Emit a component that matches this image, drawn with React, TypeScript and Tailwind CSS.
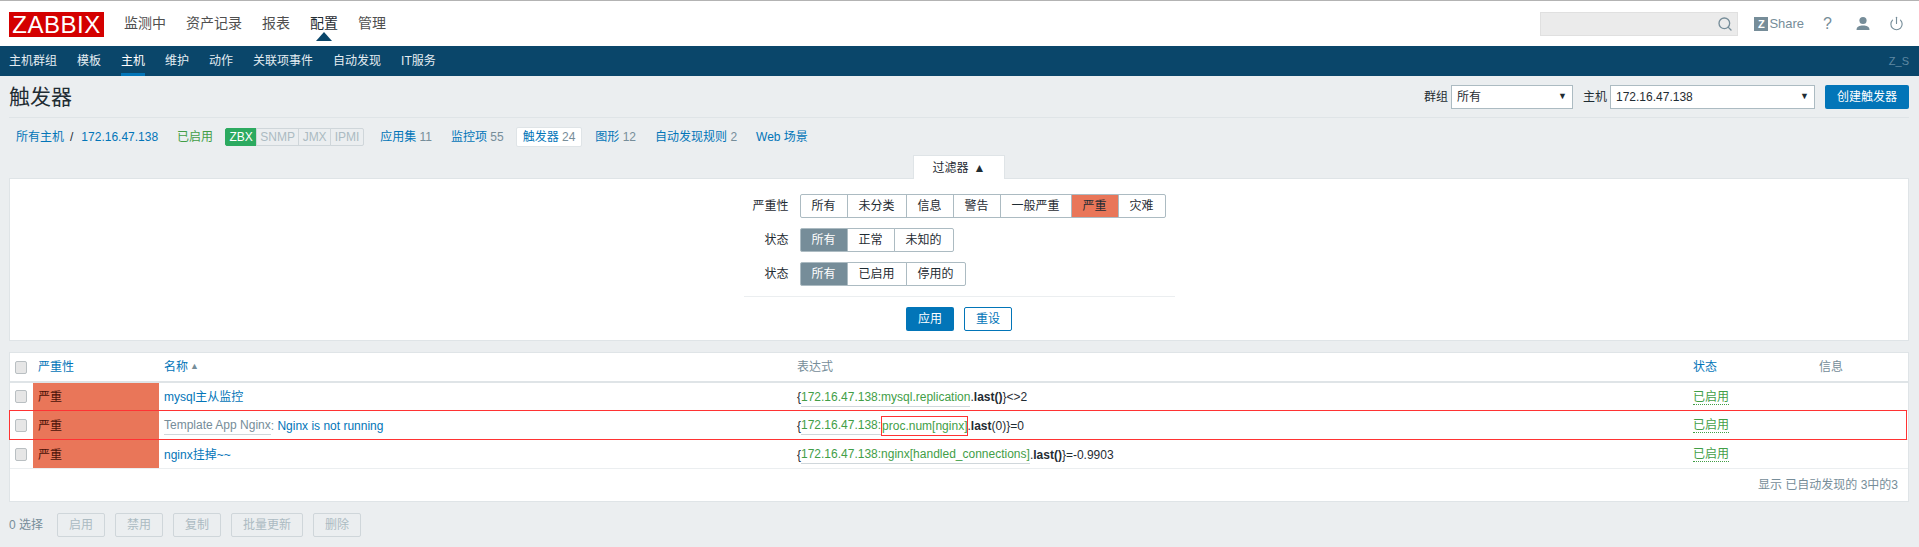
import React from "react";
import { Search, Power } from "lucide-react";

const mainNav = ["监测中", "资产记录", "报表", "配置", "管理"];
const subNav = ["主机群组", "模板", "主机", "维护", "动作", "关联项事件", "自动发现", "IT服务"];

function Seg({ items, active, tone }: { items: string[]; active: number; tone: "orange" | "gray" }) {
  return (
    <div className="flex">
      {items.map((t, i) => (
        <div
          key={t}
          className={
            "h-6 px-[11px] flex items-center border border-[#acbbc2] first:rounded-l-[2px] last:rounded-r-[2px] " +
            (i > 0 ? "-ml-px " : "") +
            (i === active
              ? tone === "orange"
                ? "bg-[#e97659] text-[#1f2c33] relative"
                : "bg-[#768d99] border-[#768d99] text-white"
              : "bg-white text-[#1f2c33]")
          }
        >
          {t}
        </div>
      ))}
    </div>
  );
}

function FilterRow({ label, children }: { label: string; children: React.ReactNode }) {
  return (
    <div className="flex items-center mt-[10px] first:mt-0">
      <div className="w-[45px] text-right text-[#1f2c33] mr-[11px]">{label}</div>
      {children}
    </div>
  );
}

function Check() {
  return (
    <div className="pl-[5px] flex items-center">
      <span className="block w-[12px] h-[13px] rounded-[2px] bg-[#e6e6e6] border border-[#b9bfc2]" />
    </div>
  );
}

function Sev() {
  return <div className="bg-[#e97659] text-[#4a1208] pl-[5px] pt-px flex items-center">严重</div>;
}

function Status() {
  return (
    <div className="pl-[5px] pt-px flex items-center">
      <span className="text-[#429e47] border-b border-dotted border-[#429e47] leading-[14px]">已启用</span>
    </div>
  );
}

const rowGrid = "grid grid-cols-[23px_126px_633px_896px_126px_1fr] border-b border-[#ebeef0]";
const uline = "text-[#429e47] border-b border-[#d0d7db]";

export default function App() {
  return (
    <div className="min-h-screen bg-[#ebeef0] text-[12px] font-[Liberation_Sans,Noto_Sans_CJK_SC,sans-serif] overflow-hidden">
      <header className="h-[46px] bg-white border-t border-[#b3b3b3] flex items-center pl-[9px] pr-[10px]">
        <div className="w-[95px] h-[25px] mt-px bg-[#d40000] text-white text-[24px] leading-[25px] tracking-[0.5px] text-center">
          ZABBIX
        </div>
        <nav className="flex ml-[10px] text-[14px] text-[#4f4f4f]">
          {mainNav.map((t) => (
            <div key={t} className={"relative px-[10px] " + (t === "配置" ? "text-[#1f2c33]" : "")}>
              {t}
              {t === "配置" && (
                <svg className="absolute left-[16px] top-[19px]" width="16" height="9" viewBox="0 0 16 9">
                  <path d="M0 9 L8 0 L16 9 Z" fill="#0a466a" />
                </svg>
              )}
            </div>
          ))}
        </nav>
        <div className="ml-auto flex items-center">
          <div className="w-[198px] h-[24px] bg-[#ebebeb] border border-[#e0e0e0] flex items-center justify-end pr-[4px]">
            <Search size={16} strokeWidth={2} className="text-[#768d99]" />
          </div>
          <div className="ml-[16px] w-[14px] h-[14px] bg-[#768d99] text-white text-[11px] font-bold leading-[14px] text-center">Z</div>
          <span className="ml-[1px] text-[13px] text-[#768d99]">Share</span>
          <span className="ml-[19px] text-[16px] leading-none text-[#768d99]">?</span>
          <svg className="ml-[24px]" width="14" height="16" viewBox="0 0 14 16">
            <circle cx="7" cy="4.5" r="3.6" fill="#768d99" />
            <path d="M0.5 14 C0.5 10.5 3.5 9.5 7 9.5 C10.5 9.5 13.5 10.5 13.5 14 Z" fill="#768d99" />
          </svg>
          <Power size={15} strokeWidth={1.8} className="ml-[19px] mr-[5px] text-[#768d99]" />
        </div>
      </header>

      <div className="h-[30px] bg-[#0a466a] flex items-stretch pr-[10px] text-[#e4edf2]">
        {subNav.map((t, i) => (
          <div key={t} className={"flex " + (i === 0 ? "ml-[9px]" : "ml-[20px]")}>
            <div className={"flex items-center h-full border-b-[3px] pt-[3px] " + (t === "主机" ? "border-[#0275b8] text-white" : "border-transparent")}>
              {t}
            </div>
          </div>
        ))}
        <div className="ml-auto flex items-center text-[11px] text-[#5f89a3]">Z_S</div>
      </div>

      <main className="pl-[9px] pr-[10px]">
        <div className="h-[42px] border-b border-[#dfe4e7] flex items-center justify-between">
          <h1 className="text-[21px] font-normal text-[#1f2c33]">触发器</h1>
          <div className="flex items-center text-[#1f2c33]">
            <span>群组</span>
            <div className="ml-[3px] w-[122px] h-[24px] bg-white border border-[#acbbc2] flex items-center justify-between px-[5px]">
              <span>所有</span>
              <span className="text-[9px]">▼</span>
            </div>
            <span className="ml-[10px]">主机</span>
            <div className="ml-[3px] w-[205px] h-[24px] bg-white border border-[#acbbc2] flex items-center justify-between px-[5px]">
              <span>172.16.47.138</span>
              <span className="text-[9px]">▼</span>
            </div>
            <div className="ml-[10px] w-[84px] h-[24px] bg-[#0275b8] text-white rounded-[2px] flex items-center justify-center">创建触发器</div>
          </div>
        </div>

        <div className="h-[37px] pt-[1px] flex items-center text-[#0275b8]">
          <span className="ml-[7px]">所有主机</span>
          <span className="ml-[6px] text-[#1f2c33]">/</span>
          <span className="ml-[8px]">172.16.47.138</span>
          <span className="ml-[19px] text-[#429e47]">已启用</span>
          <div className="ml-[12px] flex h-[18px] text-[12px] leading-[16px]">
            <span className="w-[32px] bg-[#2caa60] border border-[#2caa60] text-white text-center rounded-l-[2px]">ZBX</span>
            <span className="w-[43px] bg-[#ebeef0] border border-[#cfd6da] -ml-px text-[#acbbc2] text-center">SNMP</span>
            <span className="w-[33px] bg-[#ebeef0] border border-[#cfd6da] -ml-px text-[#acbbc2] text-center">JMX</span>
            <span className="w-[34px] bg-[#ebeef0] border border-[#cfd6da] -ml-px text-[#acbbc2] text-center rounded-r-[2px]">IPMI</span>
          </div>
          <span className="ml-[16px]">应用集 <span className="text-[#768d99]">11</span></span>
          <span className="ml-[19px]">监控项 <span className="text-[#768d99]">55</span></span>
          <span className="ml-[12px] h-[20px] px-[6px] bg-white border border-[#dfe4e7] rounded-[2px] flex items-center">触发器&nbsp;<span className="text-[#768d99]">24</span></span>
          <span className="ml-[13px]">图形 <span className="text-[#768d99]">12</span></span>
          <span className="ml-[19px]">自动发现规则 <span className="text-[#768d99]">2</span></span>
          <span className="ml-[19px]">Web 场景</span>
        </div>

        <div className="flex justify-center">
          <div className="w-[92px] h-[24px] -mb-px relative bg-white border border-b-0 border-[#dfe4e7] flex items-center justify-center text-[#1f2c33]">
            过滤器 <span className="ml-[5px] text-[12px]">▲</span>
          </div>
        </div>
        <section className="h-[163px] bg-white border border-[#dfe4e7] pt-[15px] flex flex-col items-center">
          <div className="w-[431px]">
            <FilterRow label="严重性">
              <Seg items={["所有", "未分类", "信息", "警告", "一般严重", "严重", "灾难"]} active={5} tone="orange" />
            </FilterRow>
            <FilterRow label="状态">
              <Seg items={["所有", "正常", "未知的"]} active={0} tone="gray" />
            </FilterRow>
            <FilterRow label="状态">
              <Seg items={["所有", "已启用", "停用的"]} active={0} tone="gray" />
            </FilterRow>
            <div className="mt-[10px] border-t border-[#ebeef0]" />
            <div className="mt-[10px] flex justify-center gap-[10px]">
              <div className="w-[48px] h-[24px] bg-[#0275b8] text-white rounded-[2px] flex items-center justify-center">应用</div>
              <div className="w-[48px] h-[24px] bg-white text-[#0275b8] border border-[#0275b8] rounded-[2px] flex items-center justify-center">重设</div>
            </div>
          </div>
        </section>

        <section className="mt-[11px] h-[150px] bg-white border border-[#dfe4e7] text-[#1f2c33]">
          <div className="h-[28px] grid grid-cols-[23px_126px_633px_896px_126px_1fr] border-b-[2px] border-[#dfe4e7] box-content">
            <Check />
            <div className="pl-[5px] flex items-center text-[#0275b8]">严重性</div>
            <div className="pl-[5px] flex items-center text-[#0275b8]">名称<span className="ml-[2px] text-[9px] text-[#768d99]">▲</span></div>
            <div className="pl-[5px] flex items-center text-[#768d99]">表达式</div>
            <div className="pl-[5px] flex items-center text-[#0275b8]">状态</div>
            <div className="pl-[5px] flex items-center text-[#768d99]">信息</div>
          </div>

          <div className={rowGrid + " h-[28px]"}>
            <Check />
            <Sev />
            <div className="pl-[5px] pt-px flex items-center text-[#0275b8]">mysql主从监控</div>
            <div className="pl-[5px] pt-px flex items-center whitespace-pre">
              <span>{"{"}</span><span className={uline}>172.16.47.138:mysql.replication</span><span>.</span><b>last()</b><span>{"}<>2"}</span>
            </div>
            <Status />
            <div />
          </div>

          <div className={rowGrid + " relative h-[29px]"}>
            <Check />
            <Sev />
            <div className="pl-[5px] pt-px flex items-center whitespace-pre">
              <span className="text-[#768d99] border-b border-[#d0d7db]">Template App Nginx</span>
              <span className="text-[#768d99]">: </span>
              <span className="text-[#0275b8]">Nginx is not running</span>
            </div>
            <div className="pl-[5px] pt-px flex items-center whitespace-pre">
              <span>{"{"}</span><span className={uline}>172.16.47.138:</span>
              <span className="relative text-[#429e47] ml-px">
                proc.num[nginx]
                <span className="absolute -left-[1px] -right-[1px] -top-[1px] -bottom-[1px] border border-[#f33]" />
              </span>
              <span>.</span><b>last</b><span>(0)</span><span>{"}=0"}</span>
            </div>
            <Status />
            <div />
            <div className="absolute left-[-1px] right-[1px] top-[-1px] bottom-[-1px] border border-[#f33] pointer-events-none" />
          </div>

          <div className={rowGrid + " h-[29px]"}>
            <Check />
            <Sev />
            <div className="pl-[5px] pt-px flex items-center text-[#0275b8]">nginx挂掉~~</div>
            <div className="pl-[5px] pt-px flex items-center whitespace-pre">
              <span>{"{"}</span><span className={uline}>172.16.47.138:nginx[handled_connections]</span><span>.</span><b>last()</b><span>{"}=-0.9903"}</span>
            </div>
            <Status />
            <div />
          </div>

          <div className="h-[32px] flex items-center justify-end pr-[10px] text-[#768d99]">显示 已自动发现的 3中的3</div>
        </section>

        <div className="mt-[11px] flex items-center text-[#768d99]">
          <span>0 选择</span>
          <div className="ml-[14px] flex gap-[10px]">
            {["启用", "禁用", "复制", "批量更新", "删除"].map((t) => (
              <div key={t} className="h-[24px] px-[11px] flex items-center bg-[#ebeef0] border border-[#cfd6da] rounded-[2px] text-[#acbbc2]">
                {t}
              </div>
            ))}
          </div>
        </div>
      </main>
    </div>
  );
}
